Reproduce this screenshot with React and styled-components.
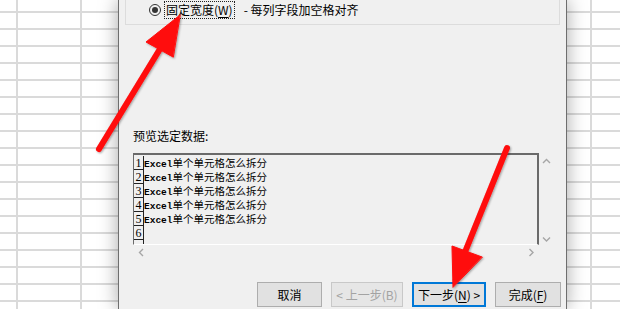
import React from "react";
import styled, { createGlobalStyle } from "styled-components";

const rows = [1, 2, 3, 4, 5, 6];
const rowText = "单个单元格怎么拆分";

const GlobalStyle = createGlobalStyle`
  html, body {
    margin: 0;
    padding: 0;
    width: 620px;
    height: 309px;
    overflow: hidden;
    background: #ffffff;
  }
  * { box-sizing: border-box; }
`;

const Page = styled.div`
  position: relative;
  display: flex;
  width: 620px;
  height: 309px;
  font-family: "Noto Sans CJK SC", "Noto Sans", sans-serif;
  font-size: 12px;
  color: #000;
`;

// sheet area behind the dialog, grid lines every 17px
const Sheet = styled.div`
  width: ${(p) => p.w}px;
  flex: none;
  background-color: #fff;
  background-image: repeating-linear-gradient(
      to bottom,
      transparent 0,
      transparent 11px,
      #dadada 11px,
      #dadada 13px,
      transparent 13px,
      transparent 17px
    ),
    ${(p) => p.cols};
`;

const Dialog = styled.div`
  position: relative;
  z-index: 1;
  width: 449px;
  flex: none;
  display: flex;
  flex-direction: column;
  background: #f0f0f0;
  border-left: 1px solid #6e6e6e;
  border-right: 1px solid #6e6e6e;
  box-shadow: 0 0 18px rgba(0, 0, 0, 0.35);
  padding: 0 5px 0 6px;
`;

const GroupBox = styled.div`
  height: 25px;
  border: 1px solid #dcdcdc;
  border-top: none;
  margin-right: 1px;
  display: flex;
  align-items: flex-start;
  padding-left: 23px;
`;

const RadioRow = styled.div`
  display: flex;
  align-items: center;
  height: 19px;
`;

const Radio = styled.span`
  width: 12px;
  height: 12px;
  border: 1px solid #333;
  border-radius: 50%;
  display: grid;
  place-items: center;
  margin-right: 3px;
  &::after {
    content: "";
    width: 6px;
    height: 6px;
    border-radius: 50%;
    background: #333;
  }
`;

const FocusLabel = styled.span`
  border: 1px dotted #222;
  padding: 0 1px;
  line-height: 16px;
  height: 18px;
`;

const Hint = styled.span`
  margin-left: 9px;
  line-height: 16px;
`;

const Label = styled.div`
  margin-top: 103px;
  margin-left: 8px;
  line-height: 16px;
`;

const Preview = styled.div`
  margin: 9px 0 0 8px;
  display: grid;
  grid-template-columns: 406px 14px;
  grid-template-rows: 92px 15px;
`;

const Box = styled.div`
  border-top: 2px solid #6a6a6a;
  border-left: 1px solid #6a6a6a;
  border-right: 2px solid #6a6a6a;
  border-bottom: 1px solid #ffffff;
  padding-top: 1px;
  overflow: hidden;
`;

const Row = styled.div`
  display: flex;
  height: 14px;
  align-items: stretch;
  overflow: hidden;
`;

const Num = styled.span`
  width: 10px;
  flex: none;
  border-right: 1px solid #222;
  border-bottom: 1px solid #222;
  font-family: "Liberation Serif", "DejaVu Serif", serif;
  font-size: 12px;
  line-height: 14px;
  text-align: center;
`;

const Line = styled.span`
  font-family: "Noto Sans CJK SC", sans-serif;
  font-size: 10.5px;
  line-height: 14px;
  white-space: nowrap;
`;

const Latin = styled.span`
  font-family: "Liberation Mono", "DejaVu Sans Mono", monospace;
  font-size: 9.5px;
  font-weight: bold;
`;

const Tail = styled.div`
  height: 5px;
  width: 10px;
  border-right: 1px solid #222;
`;

const VScroll = styled.div`
  display: flex;
  flex-direction: column;
  justify-content: space-between;
  align-items: center;
  padding: 5px 0 2px;
`;

const HScroll = styled.div`
  display: flex;
  justify-content: space-between;
  align-items: center;
  padding: 0 4px 0 5px;
`;

const Chevron = ({ dir }) => {
  const pts = {
    up: "1,5 4.5,1.5 8,5",
    down: "1,1.5 4.5,5 8,1.5",
    left: "5,1 1.5,4.5 5,8",
    right: "1.5,1 5,4.5 1.5,8",
  }[dir];
  const horiz = dir === "left" || dir === "right";
  return (
    <svg width={horiz ? 7 : 9} height={horiz ? 9 : 7} viewBox={horiz ? "0 0 7 9" : "0 0 9 7"}>
      <polyline points={pts} fill="none" stroke="#a6a6a6" strokeWidth="1.4" />
    </svg>
  );
};

const Buttons = styled.div`
  margin-top: 22px;
  display: flex;
  justify-content: flex-end;
  gap: 9px;
`;

const Button = styled.div`
  width: ${(p) => p.w}px;
  height: 25px;
  display: grid;
  place-items: center;
  background: ${(p) => (p.disabled ? "#e6e6e6" : "#e1e1e1")};
  border: 1px solid ${(p) => (p.primary ? "#0078d7" : p.disabled ? "#c8c8c8" : "#adadad")};
  box-shadow: ${(p) => (p.primary ? "inset 0 0 0 1px #0078d7" : "none")};
  color: ${(p) => (p.disabled ? "#a3a3a3" : "#000")};
  font-size: 12px;
  line-height: 16px;
  white-space: nowrap;
`;

const U = styled.span`
  text-decoration: underline;
  text-underline-offset: 2px;
`;

const Arrows = styled.svg`
  position: absolute;
  left: 0;
  top: 0;
  z-index: 2;
  pointer-events: none;
`;

const RedArrows = () => (
  <Arrows width="620" height="309" viewBox="0 0 620 309">
    <defs>
      <filter id="sh" x="-20%" y="-20%" width="140%" height="140%">
        <feDropShadow dx="1" dy="1" stdDeviation="1.2" floodColor="#000" floodOpacity="0.35" />
      </filter>
    </defs>
    <g filter="url(#sh)" fill="#ff0a0a" stroke="#ff0a0a" strokeLinecap="round">
      <line x1="99" y1="149" x2="163" y2="44" strokeWidth="6" />
      <polygon points="180,15 146,42 173,57" strokeWidth="1" strokeLinejoin="round" />
      <line x1="507" y1="148" x2="465" y2="252" strokeWidth="6" />
      <polygon points="453,287 452,246 482,257" strokeWidth="1" strokeLinejoin="round" />
    </g>
  </Arrows>
);

export default function App() {
  return (
    <Page>
      <GlobalStyle />
      <Sheet
        w={118}
        cols="linear-gradient(to right, transparent 16px, #dadada 16px, #dadada 18px, transparent 18px, transparent 80px, #dadada 80px, #dadada 82px, transparent 82px)"
      />
      <Dialog>
        <GroupBox>
          <RadioRow>
            <Radio />
            <FocusLabel>
              固定宽度(<U>W</U>)
            </FocusLabel>
            <Hint>- 每列字段加空格对齐</Hint>
          </RadioRow>
        </GroupBox>
        <Label>预览选定数据:</Label>
        <Preview>
          <Box>
            {rows.map((n) => (
              <Row key={n}>
                <Num>{n}</Num>
                {n < 6 && (
                  <Line>
                    <Latin>Excel</Latin>
                    {rowText}
                  </Line>
                )}
              </Row>
            ))}
            <Tail />
          </Box>
          <VScroll>
            <Chevron dir="up" />
            <Chevron dir="down" />
          </VScroll>
          <HScroll>
            <Chevron dir="left" />
            <Chevron dir="right" />
          </HScroll>
        </Preview>
        <Buttons>
          <Button w={65}>取消</Button>
          <Button w={72} disabled>
            &lt; 上一步(B)
          </Button>
          <Button w={74} primary>
            <span>
              下一步(<U>N</U>) &gt;
            </span>
          </Button>
          <Button w={66}>
            <span>
              完成(<U>F</U>)
            </span>
          </Button>
        </Buttons>
      </Dialog>
      <Sheet
        w={53}
        cols="linear-gradient(to right, transparent 23px, #dadada 23px, #dadada 25px, transparent 25px)"
      />
      <RedArrows />
    </Page>
  );
}
